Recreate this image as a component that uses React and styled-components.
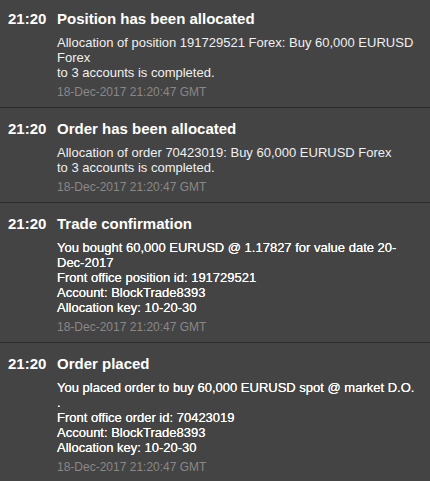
import React from "react";
import styled, { createGlobalStyle } from "styled-components";

const Global = createGlobalStyle`
  html, body { margin: 0; padding: 0; background: #444444; }
  body { font-family: "Liberation Sans", Arial, sans-serif; }
`;

const List = styled.div`
  width: 430px;
  height: 481px;
  overflow: hidden;
  background: #444444;
  display: flex;
  flex-direction: column;
`;

const Item = styled.div`
  padding: ${(p) => (p.$first ? "10px" : "12px")} 8px 7px 8px;
  border-bottom: 1px solid #2a2a2a;
  flex-shrink: 0;
`;

const Header = styled.div`
  display: flex;
  align-items: baseline;
  font-size: 15px;
  line-height: 18px;
  font-weight: bold;
  color: #ffffff;
`;

const Time = styled.span`
  width: 49px;
  flex-shrink: 0;
`;

const Title = styled.span``;

const Content = styled.div`
  margin-left: 49px;
  margin-top: 7px;
`;

const Line = styled.div`
  font-size: 13px;
  line-height: 15px;
  white-space: nowrap;
  color: ${(p) => (p.$strong ? "#ffffff" : "#f0f0f0")};
  text-shadow: ${(p) => (p.$strong ? "0 0 0.4px #ffffff" : "none")};
`;

const Stamp = styled.div`
  margin-top: 5px;
  font-size: 12px;
  line-height: 15px;
  color: #888888;
`;

const items = [
  {
    title: "Position has been allocated",
    lines: [
      "Allocation of position 191729521 Forex: Buy 60,000 EURUSD",
      "Forex",
      "to 3 accounts is completed.",
    ],
    strong: false,
  },
  {
    title: "Order has been allocated",
    lines: [
      "Allocation of order 70423019: Buy 60,000 EURUSD Forex",
      "to 3 accounts is completed.",
    ],
    strong: false,
  },
  {
    title: "Trade confirmation",
    lines: [
      "You bought 60,000 EURUSD @ 1.17827 for value date 20-",
      "Dec-2017",
      "Front office position id: 191729521",
      "Account: BlockTrade8393",
      "Allocation key: 10-20-30",
    ],
    strong: true,
  },
  {
    title: "Order placed",
    lines: [
      "You placed order to buy 60,000 EURUSD spot @ market D.O.",
      ".",
      "Front office order id: 70423019",
      "Account: BlockTrade8393",
      "Allocation key: 10-20-30",
    ],
    strong: true,
  },
];

export default function App() {
  return (
    <>
      <Global />
      <List>
        {items.map((it, i) => (
          <Item key={i} $first={i === 0}>
            <Header>
              <Time>21:20</Time>
              <Title>{it.title}</Title>
            </Header>
            <Content>
              {it.lines.map((l, j) => (
                <Line key={j} $strong={it.strong}>
                  {l}
                </Line>
              ))}
              <Stamp>18-Dec-2017 21:20:47 GMT</Stamp>
            </Content>
          </Item>
        ))}
      </List>
    </>
  );
}
